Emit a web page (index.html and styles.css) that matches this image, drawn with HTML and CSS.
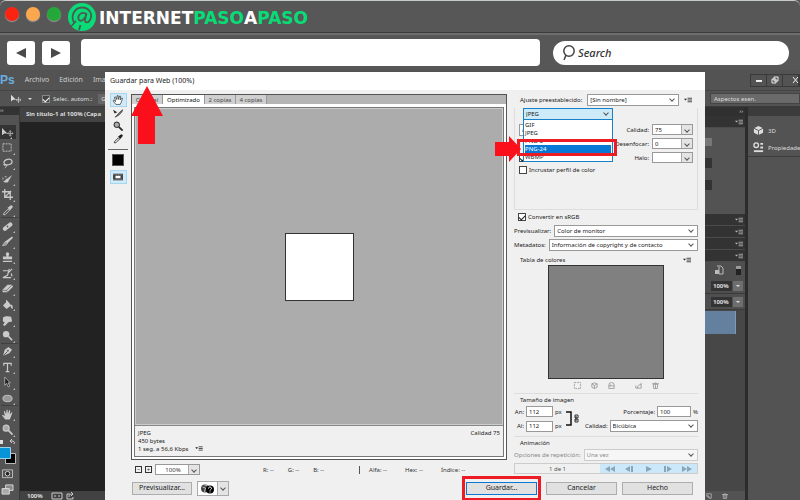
FILE: index.html
```html
<!DOCTYPE html>
<html lang="es">
<head>
<meta charset="utf-8">
<title>Guardar para Web</title>
<link rel="stylesheet" href="styles.css">
</head>
<body>
<svg class="sprite" aria-hidden="true">
  <symbol id="i-move" viewBox="0 0 14 12"><path d="M1 1v8l2.400-2H7z" fill="currentColor"/><path d="M10 4v6M7 7h6M9 5l1-1 1 1M9 9l1 1 1-1M8 6L7 7l1 1M12 6l1 1-1 1" fill="none" stroke="currentColor" stroke-width=".8"/></symbol>
  <symbol id="i-marquee" viewBox="0 0 14 12"><path d="M2 2h9v8H2z" fill="none" stroke="currentColor" stroke-dasharray="2 1"/></symbol>
  <symbol id="i-lasso" viewBox="0 0 14 12"><ellipse cx="7.500" cy="4.500" rx="4.500" ry="3" fill="none" stroke="currentColor" stroke-width="1.300" transform="rotate(-12 7 4)"/><path d="M4 6c-2 1-1 3 1 2s1 2-1 3" fill="none" stroke="currentColor"/></symbol>
  <symbol id="i-quick" viewBox="0 0 14 12"><path d="M12 1L7 5l1.500 2z" fill="currentColor"/><path d="M7 5c-2 0-2 3-5 3 2 2 6 2 6.500-1z" fill="currentColor"/><path d="M2 6V4M4 3h2" stroke="currentColor"/></symbol>
  <symbol id="i-crop" viewBox="0 0 14 12"><path d="M4 0v9h9M1 3h9v9M5 8l6-6" fill="none" stroke="currentColor" stroke-width="1.400"/></symbol>
  <symbol id="i-dropper" viewBox="0 0 14 12"><path d="M2.500 10.500L3 9l4.500-4.500 1.500 1.500L4.500 10.500z" fill="none" stroke="currentColor"/><path d="M7 3l1-.5L10 .8a1.500 1.500 0 0 1 2.200 2.200L10.500 5l-.5 1z" fill="currentColor"/></symbol>
  <symbol id="i-heal" viewBox="0 0 14 12"><rect x="1" y="4" width="12" height="4.500" rx="2" transform="rotate(-38 7 6)" fill="currentColor"/><path d="M6 6h2M7 5v2" stroke="#555"/></symbol>
  <symbol id="i-brush" viewBox="0 0 14 12"><path d="M12 .5L13 2 7 8 4.500 6z" fill="currentColor"/><path d="M4.500 6C3 7 3 9 1.500 10.500 4 10.500 6.500 10 7 8z" fill="#999" stroke="currentColor" stroke-width=".7"/></symbol>
  <symbol id="i-stamp" viewBox="0 0 14 12"><path d="M5.500 1a2 2 0 0 1 3 0c1 1-.5 3-.5 4h4v3H2V5h4c0-1-1.500-3-.5-4zM2 9.500h10v1.500H2z" fill="currentColor"/></symbol>
  <symbol id="i-history" viewBox="0 0 14 12"><path d="M2 3h6M9 1L7 8 2 10.500h9" fill="none" stroke="currentColor" stroke-width="1.300"/><path d="M12 1L8 5M11 6l1 3" stroke="currentColor" stroke-width="1.300"/></symbol>
  <symbol id="i-eraser" viewBox="0 0 14 12"><path d="M1 8l6-6h5l1 2-6 6H2z" fill="currentColor"/><path d="M1 8h5l6-6M6 8l1 2" fill="none" stroke="#555" stroke-width=".7"/></symbol>
  <symbol id="i-bucket" viewBox="0 0 14 12"><path d="M2 7l5-5 4 5-5 4zM11 6c2 1 2 3 1.500 5-1.500-1-2-2-2-4z" fill="currentColor"/><path d="M6 6V1" stroke="currentColor"/></symbol>
  <symbol id="i-smudge" viewBox="0 0 14 12"><path d="M2 3c2-2 6-2 9-1l1 5-4 1-4 4-2-1 2-3-2-1z" fill="currentColor"/></symbol>
  <symbol id="i-dodge" viewBox="0 0 14 12"><circle cx="5.500" cy="4.500" r="3.500" fill="currentColor"/><path d="M8 7l4 4" stroke="currentColor" stroke-width="1.800"/></symbol>
  <symbol id="i-pen" viewBox="0 0 14 12"><path d="M2 11l2-7 4-3 4 3-3 4z" fill="currentColor"/><path d="M2 11l5-5" stroke="#555"/><circle cx="7.500" cy="5" r="1" fill="#555"/></symbol>
  <symbol id="i-type" viewBox="0 0 14 12"><path d="M3 4V1.500h8V4M7 1.500v9M5 10.500h4" fill="none" stroke="currentColor" stroke-width="1.300"/></symbol>
  <symbol id="i-path" viewBox="0 0 14 12"><path d="M4 0v9l2-2 2 4 1.500-1-2-3.500H10z" fill="#1b1b1b" stroke="currentColor" stroke-width=".8"/></symbol>
  <symbol id="i-ellipse" viewBox="0 0 14 12"><ellipse cx="7" cy="6" rx="5" ry="3.500" fill="#999" stroke="currentColor"/></symbol>
  <symbol id="i-hand" viewBox="0 0 14 12"><path d="M4.500 11.500L1 7l1-.7L4.200 8 3 2.500l1-.4L5.500 5.500 6 .8h1l.5 4.500L9 1.200l1 .3-.5 4.500L11.500 3.500l.8.500L10.500 9l-1 2.500z" fill="currentColor"/></symbol>
  <symbol id="i-hand-o" viewBox="0 0 14 12"><path d="M4.500 11.300L1 7l1-.9L4.200 8 2.800 2.700l1.200-.5L5.500 5.500 6 .8h1.200l.3 4.500L9 1.200l1.200.3-.7 4.500L11.500 3.500l1 .5L10.700 9l-1 2.300z" fill="#fff" stroke="#222" stroke-width=".8"/></symbol>
  <symbol id="i-zoom" viewBox="0 0 14 12"><circle cx="5.500" cy="4.500" r="3.300" fill="#aaa" stroke="currentColor" stroke-width="1.200"/><path d="M8 7l4.500 4.500" stroke="currentColor" stroke-width="2"/></symbol>
  <symbol id="i-slice" viewBox="0 0 14 12"><path d="M1 2l5 3-3 1.500z" fill="currentColor"/><path d="M12.500 2c0 3-4 7-9 9L9 5z" fill="#777" stroke="currentColor" stroke-width=".7"/></symbol>
  <symbol id="i-mask" viewBox="0 0 14 12"><path d="M1.500 2h11v8.500h-11z" fill="none" stroke="currentColor" stroke-width=".8"/><circle cx="7" cy="6.200" r="2.500" fill="#222" stroke="currentColor"/></symbol>
  <symbol id="i-screen" viewBox="0 0 14 12"><path d="M5 1h8v6H5z" fill="#888" stroke="currentColor"/><path d="M1 5h8v6H1z" fill="#aaa" stroke="currentColor"/></symbol>
  <symbol id="i-flyout" viewBox="0 0 9 6"><path d="M0 1.500h3.400L1.700 3.500z" fill="currentColor"/><path d="M4 1h5M4 3h5M4 5h5" stroke="currentColor" stroke-width=".9"/></symbol>
  <symbol id="i-page" viewBox="0 0 8 8"><path d="M1 1h6v6H4L1 4zM1 4h3v3" fill="none" stroke="currentColor"/></symbol>
  <symbol id="i-trash" viewBox="0 0 8 8"><path d="M0 2h8M3 1h2M1.500 2.500h5L6 7.500H2zM4 3v4" fill="none" stroke="currentColor"/></symbol>
  <symbol id="i-lock" viewBox="0 0 8 8"><path d="M1 7.500V3.500a3 3 0 0 1 6 0v4zM1 4.500h6M3 4.500V3" fill="none" stroke="currentColor"/></symbol>
</svg>

<header class="titlebar">
  <span class="light red"></span><span class="light amber"></span><span class="light green"></span>
  <svg class="logo" viewBox="0 0 28 28" aria-hidden="true">
    <circle cx="14" cy="14" r="14" fill="#09dc76"/>
    <path d="M6.500 20C2 14 6 4.500 14 4.500S25 12 22 17c-2 3.500-5.500 3-5 0l1.500-7" fill="none" stroke="#4d5a54" stroke-width="1.800"/>
    <path d="M18 11c-4-3-8.500 1-7.500 5 1 3 5 2 6.500-2M8 18l-5.500 6M12.500 22l-1.500 5" fill="none" stroke="#4d5a54" stroke-width="1.800"/>
  </svg>
  <div class="brand">INTERNET<b>PASO</b>A<b>PASO</b></div>
</header>

<nav class="navbar" aria-label="Navegador">
  <button class="nav" aria-label="Atrás"><svg viewBox="0 0 10 10"><path d="M10 0v10L0 5z"/></svg></button>
  <button class="nav" aria-label="Adelante"><svg viewBox="0 0 10 10"><path d="M0 0v10l10-5z"/></svg></button>
  <input class="address" type="text" aria-label="Dirección">
  <label class="search">
    <svg viewBox="0 0 14 16"><circle cx="7" cy="6" r="5.200"/><path d="M4 10l-2 5"/></svg>
    <input type="text" placeholder="Search" aria-label="Buscar">
  </label>
</nav>

<main class="app">
  <div class="menubar">
    <span class="ps">Ps</span><a href="#">Archivo</a><a href="#">Edición</a><a href="#">Ima</a>
    <div class="winctl"><button aria-label="Minimizar"><svg viewBox="0 0 16 10"><path d="M5 6h6" stroke-width="2"/></svg></button><button aria-label="Restaurar"><svg viewBox="0 0 16 10"><path d="M7 2h4v4H7zM5 4h4v4H5z"/></svg></button><button aria-label="Cerrar"><svg viewBox="0 0 16 10"><path d="M10 2l5 6M15 2l-5 6"/></svg></button></div>
  </div>
  <div class="options">
    <svg class="ico"><use href="#i-move"/></svg><i class="caret"></i>
    <label class="auto"><input type="checkbox" checked>Selec. autom.:</label>
    <span class="group">G</span>
    <button class="workspace">Aspectos esen.</button>
  </div>
  <div class="work">
    <aside class="tools">
      <div class="grip">››</div>
      <div class="toollist">
        <button class="on" aria-label="Mover"><svg><use href="#i-move"/></svg></button>
        <button aria-label="Marco"><svg><use href="#i-marquee"/></svg></button>
        <button aria-label="Lazo"><svg><use href="#i-lasso"/></svg></button>
        <button aria-label="Selección rápida"><svg><use href="#i-quick"/></svg></button>
        <button aria-label="Recortar"><svg><use href="#i-crop"/></svg></button>
        <button class="last" aria-label="Cuentagotas"><svg><use href="#i-dropper"/></svg></button>
        <button aria-label="Corrector"><svg><use href="#i-heal"/></svg></button>
        <button aria-label="Pincel"><svg><use href="#i-brush"/></svg></button>
        <button aria-label="Tampón"><svg><use href="#i-stamp"/></svg></button>
        <button aria-label="Historia"><svg><use href="#i-history"/></svg></button>
        <button aria-label="Borrador"><svg><use href="#i-eraser"/></svg></button>
        <button aria-label="Bote"><svg><use href="#i-bucket"/></svg></button>
        <button aria-label="Dedo"><svg><use href="#i-smudge"/></svg></button>
        <button class="last" aria-label="Sobreexponer"><svg><use href="#i-dodge"/></svg></button>
        <button aria-label="Pluma"><svg><use href="#i-pen"/></svg></button>
        <button aria-label="Texto"><svg><use href="#i-type"/></svg></button>
        <button aria-label="Trazado"><svg><use href="#i-path"/></svg></button>
        <button class="last" aria-label="Elipse"><svg><use href="#i-ellipse"/></svg></button>
        <button aria-label="Mano"><svg><use href="#i-hand"/></svg></button>
        <button aria-label="Zoom"><svg><use href="#i-zoom"/></svg></button>
      </div>
      <svg class="swatches" viewBox="0 0 18 30"><path d="M0 3h3v4H0z" fill="#ddd"/><path d="M10 4h3a2 2 0 0 1 1 3M12 2l-2 2 2 2" fill="none" stroke="#ccc"/><path d="M5.500 16.500h10v10h-10z" fill="#000" stroke="#bbb"/><path d="M-1 10.500h11.500v11H-1z" fill="#0795d8" stroke="#9bd3ee"/></svg>
      <div class="modes"><svg><use href="#i-mask"/></svg><svg><use href="#i-screen"/></svg></div>
    </aside>
    <section class="document">
      <div class="doctab">Sin título-1 al 100% (Capa</div>
      <div class="stage"></div>
      <div class="docstatus">100%<svg viewBox="0 0 24 8"><path d="M1 1h10v6H1zM4 3v2M8 3v2M19 2h-3v5h6V5M18 5c0-3 2-3 4-3M20 0l2 2-2 2" fill="none" stroke="#ccc"/></svg></div>
    </section>
    <aside class="layers">
      <div class="strip">››</div>
      <div class="panelhead"><svg><use href="#i-flyout"/></svg></div>
      <div class="adjust"><i></i><i></i><i></i></div>
      <div class="panelhead"><svg><use href="#i-flyout"/></svg></div>
      <div class="panelhead"><svg><use href="#i-flyout"/></svg></div>
      <div class="panelhead"><svg><use href="#i-flyout"/></svg></div>
      <div class="panelhead"><svg><use href="#i-flyout"/></svg></div>
      <div class="filters"><svg viewBox="0 0 8 8"><path d="M2 0h4l2 2v6H4M4 8V1" fill="none" stroke="currentColor"/><path d="M0 4h4v4H0z" fill="currentColor"/></svg><b></b></div>
      <div class="pct"><span>100%</span><b><i class="caret"></i></b></div>
      <div class="pct"><span>100%</span><b><i class="caret"></i></b></div>
      <div class="layerlist"><div class="layer"></div></div>
      <div class="layerfoot"><svg viewBox="0 0 8 8"><use href="#i-page"/></svg><svg viewBox="0 0 8 8"><use href="#i-trash"/></svg></div>
    </aside>
    <aside class="dock">
      <div class="strip"></div>
      <div class="dockgroup">
      <button><svg viewBox="0 0 12 12"><path d="M6 1l5 2.500v5L6 11 1 8.500v-5z" fill="#ddd"/><path d="M1 3.500L6 6l5-2.500M6 6v5" fill="none" stroke="#555"/></svg>3D</button>
      <button><svg viewBox="0 0 12 12"><circle cx="3.500" cy="3.500" r="2.500" fill="none" stroke="#ddd" stroke-width="1.500"/><path d="M8 1h3v2H8zM8 5h3v2H8z" fill="#ddd"/><path d="M1 10h10" stroke="#ddd" stroke-width="2"/></svg>Propiedade</button>
      </div>
    </aside>
  </div>

  <section class="dialog" role="dialog" aria-labelledby="dlg">
    <h1 id="dlg">Guardar para Web (100%)</h1>
    <div class="dlgmain">
      <div class="dlgtools">
        <button class="sel" aria-label="Mano"><svg><use href="#i-hand-o"/></svg></button>
        <button aria-label="Sector"><svg><use href="#i-slice"/></svg></button>
        <button aria-label="Zoom"><svg><use href="#i-zoom"/></svg></button>
        <button aria-label="Cuentagotas"><svg><use href="#i-dropper"/></svg></button>
        <hr>
        <button class="black" aria-label="Color"></button>
        <button class="sel" aria-label="Sectores"><svg viewBox="0 0 14 12"><path d="M1 2h12v8H1z" fill="#444"/><path d="M4 4.500h6v3H4z" fill="#fff"/><path d="M1 3.200h12M1 8.800h12" stroke="#ccc" stroke-width=".7" stroke-dasharray="1 1"/></svg></button>
      </div>
      <div class="preview">
        <div class="tabs"><button>Original</button><button class="active">Optimizado</button><button>2 copias</button><button>4 copias</button></div>
        <div class="pane">
          <div class="canvas"><div class="art"></div></div>
          <div class="info"><p>JPEG<br>450 bytes<br>1 seg. a 56,6 Kbps <svg><use href="#i-flyout"/></svg></p><p>Calidad 75</p></div>
        </div>
      </div>
      <form class="settings">
        <div class="row preset"><label for="preset">Ajuste preestablecido:</label><span class="drop"><select id="preset"><option>[Sin nombre]</option></select></span><svg class="fly"><use href="#i-flyout"/></svg></div>
        <div class="optimize">
          <div class="format">
            <span class="drop blue"><select aria-label="Formato"><option>JPEG</option></select></span>
            <ul class="menu"><li>GIF</li><li>JPEG</li><li>PNG-8</li><li class="hot">PNG-24</li><li>WBMP</li></ul>
            <div class="mark"></div>
            <svg class="arrow-right" viewBox="0 0 26 26"><path d="M0 6h14V0l12 13-12 13v-6H0z"/></svg>
          </div>
          <div class="line"><span class="drop alg"><select aria-label="Algoritmo"><option>A</option></select></span><label for="q">Calidad:</label><span class="spin"><input id="q" value="75"><i></i></span></div>
          <div class="line"><label for="blur">Desenfocar:</label><span class="spin"><input id="blur" value="0"><i></i></span></div>
          <div class="line"><input class="opt" type="checkbox" aria-label="Optimizado" checked><label for="matte">Halo:</label><span class="spin"><input id="matte"><i></i></span></div>
          <label class="check"><input type="checkbox">Incrustar perfil de color</label>
        </div>
        <label class="check srgb"><input type="checkbox" checked>Convertir en sRGB</label>
        <div class="row wide"><label for="pv">Previsualizar:</label><span class="drop"><select id="pv"><option>Color de monitor</option></select></span></div>
        <div class="row wide"><label for="md">Metadatos:</label><span class="drop"><select id="md"><option>Información de copyright y de contacto</option></select></span></div>
        <div class="legend">Tabla de colores<svg class="fly"><use href="#i-flyout"/></svg></div>
        <div class="table"></div>
        <div class="tableicons"><svg viewBox="0 0 8 8"><path d="M.5.5h7v7h-7z" fill="none" stroke="currentColor" stroke-dasharray="2 1"/></svg><svg viewBox="0 0 8 8"><path d="M1 2l3-1 3 1v4L4 7.500 1 6zM1 2l3 2 3-2M4 4v3" fill="none" stroke="currentColor"/></svg><svg viewBox="0 0 8 8"><use href="#i-lock"/></svg><svg class="new" viewBox="0 0 8 8"><path d="M1 7h6V1M3 7c0-3 1-4 4-4M1 4v3" fill="none" stroke="currentColor"/></svg><svg viewBox="0 0 8 8"><use href="#i-trash"/></svg></div>
        <div class="legend ruled">Tamaño de imagen</div>
        <div class="dims">
          <label for="w">An:</label><input id="w" value="112"><span>px</span>
          <svg class="link" viewBox="0 0 16 18"><path d="M1 2h5v13H1" fill="none" stroke="#111" stroke-width="1.500"/><path d="M10 5h3v3h-3zM10 9h3v3h-3zM11 6v5" fill="none" stroke="#333"/></svg>
          <div class="pair"><label for="pc">Porcentaje:</label><input id="pc" value="100"><span>%</span></div>
          <label for="h">Al:</label><input id="h" value="112"><span>px</span>
          <div class="pair"><label for="qq">Calidad:</label><span class="drop"><select id="qq"><option>Bicúbica</option></select></span></div>
        </div>
        <div class="legend ruled">Animación</div>
        <div class="row wide off"><label for="rep">Opciones de repetición:</label><span class="drop"><select id="rep" disabled><option>Una vez</option></select></span></div>
        <div class="player"><span>1 de 1</span><div>
          <button type="button" aria-label="Primero"><svg viewBox="0 0 12 6"><path d="M6 0v6L1 3zM11 0v6L6 3z"/></svg></button><button type="button" aria-label="Anterior"><svg viewBox="0 0 12 6"><path d="M7 0v6L2 3zM8 0h2v6H8z"/></svg></button><button type="button" aria-label="Reproducir"><svg viewBox="0 0 12 6"><path d="M3 0v6l6-3z"/></svg></button><button type="button" aria-label="Siguiente"><svg viewBox="0 0 12 6"><path d="M5 0v6l5-3zM2 0h2v6H2z"/></svg></button><button type="button" aria-label="Último"><svg viewBox="0 0 12 6"><path d="M1 0v6l5-3zM6 0v6l5-3z"/></svg></button></div></div>
      </form>
    </div>
    <div class="readout">
      <button aria-label="Reducir">−</button><button aria-label="Ampliar">+</button>
      <span class="spin zoomlevel"><input aria-label="Zoom" value="100%"><i></i></span>
      <div class="rgb"><span>R: --</span><span>G: --</span><span>B: --</span></div>
      <div class="alpha"><span>Alfa: --</span><span>Hex: --</span><span>Índice: --</span></div>
    </div>
    <footer>
      <button class="btn prev">Previsualizar...</button>
      <span class="globe"><svg viewBox="0 0 14 10"><circle cx="4.500" cy="4.500" r="4" fill="#444"/><path d="M2 3l3 1-1 4M4 1l3 1" stroke="#bbb" fill="none"/><circle cx="9.500" cy="5.500" r="4" fill="#000"/><path d="M8 4.500c0-2 3-2 3 0 0 1-1.500 1-1.500 2M9.500 7.500v1" stroke="#fff" fill="none"/></svg><i></i></span>
      <span class="focus"><button class="btn">Guardar...</button></span>
      <button class="btn">Cancelar</button>
      <button class="btn">Hecho</button>
    </footer>
    <svg class="arrow-up" viewBox="0 0 32 58"><path d="M16 0l16 30h-8v28H7V30H0z"/></svg>
  </section>
</main>
</body>
</html>
```
FILE: styles.css
```css
* { box-sizing: border-box; }
html, body { height: 100%; }
body {
  margin: 0;
  display: flex;
  flex-direction: column;
  background: #575757;
  font: 6px/8px "Noto Sans", "Open Sans", sans-serif;
  color: #222;
  overflow: hidden;
}
button, input, select { font: inherit; color: inherit; margin: 0; padding: 0; border: 0; border-radius: 0; background: none; }
svg { display: block; overflow: visible; }
.sprite { position: absolute; width: 0; height: 0; }

/* Browser frame */
.titlebar {
  flex: none;
  height: 33px;
  display: flex;
  align-items: center;
  padding: 0 5px;
  gap: 7px;
  background: #575757;
  border-top: 1px solid #c6ccc8;
  border-bottom: 1px solid #3c3c3c;
  border-radius: 6px 6px 0 0;
}
.light { width: 14px; height: 14px; margin-bottom: 6px; border-radius: 50%; box-shadow: 0 1px 1px #999; }
.red { background: #fb2413; }
.amber { background: #fba74e; }
.green { background: #24a83a; }
.logo { width: 28px; height: 28px; }
.brand { font: bold 17px/20px "DejaVu Sans", sans-serif; color: #fff; margin: 2px 0 0 -4px; }
.brand b { color: #09dc76; }
.navbar {
  flex: none;
  height: 37px;
  display: flex;
  align-items: center;
  gap: 7px;
  padding: 2px 11px 2px 7px;
  border-top: 2px solid #6e6e6e;
  background: #575757;
}
.nav { width: 28px; height: 24px; border-radius: 3px; background: #fff; display: grid; place-items: center; }
.nav svg { width: 10px; height: 10px; fill: #4a4a4a; }
.address { flex: 459; min-width: 0; height: 27px; margin-left: 4px; border-radius: 4px; background: #fff; }
.search { flex: 227; min-width: 0; height: 24px; margin-left: 6px; padding-left: 9px; border-radius: 12px; background: #fff; display: flex; align-items: center; gap: 2px; }
.search svg { flex: none; width: 14px; height: 16px; fill: none; stroke: #444; stroke-width: 1.500; }
.search input { flex: 1; min-width: 0; font: italic 500 11px/14px "Noto Sans", sans-serif; }
.search input::placeholder { color: #333; opacity: 1; }

/* Editor behind the dialog */
.app { flex: 1; min-height: 0; position: relative; display: flex; flex-direction: column; background: #535353; color: #ddd; }
.menubar { height: 20px; flex: none; display: flex; align-items: center; gap: 10px; font-size: 7px; color: #ccc; }
.menubar a { color: inherit; text-decoration: none; }
.ps { font: bold 12px/16px "Liberation Sans", sans-serif; color: #6aaee0; }
.winctl { margin-left: auto; display: flex; border: 1px solid #3a3a3a; }
.winctl button { width: 16px; height: 11px; border-right: 1px solid #3a3a3a; }
.winctl svg { width: 16px; height: 10px; fill: none; stroke: #eee; }
.options { height: 17px; flex: none; display: flex; align-items: center; gap: 6px; padding-left: 10px; border-top: 1px solid #444; border-bottom: 1px solid #3a3a3a; }
.options .ico { width: 12px; height: 10px; }
.caret { width: 0; height: 0; border: 2px solid transparent; border-top-color: #ddd; border-bottom: 0; }
.auto { display: flex; align-items: center; gap: 3px; margin-left: 4px; }
.group { padding: 1px 3px; background: #666; }
.workspace { margin-left: auto; width: 90px; height: 11px; padding-left: 3px; text-align: left; background: #6a6a6a; border: 1px solid #444; }
.work { flex: 1; min-height: 0; display: flex; background: #3a3a3a; }
.tools { width: 20px; display: flex; flex-direction: column; background: #535353; border-right: 1px solid #383838; }
.grip { height: 18px; background: linear-gradient(#333 8px, #535353 8px); line-height: 7px; }
.toollist { height: 312px; display: flex; flex-direction: column; justify-content: space-between; }
.toollist button { height: 14px; padding-left: 1px; color: #cacaca; position: relative; }
.toollist button::after { content: ""; position: absolute; right: 4px; bottom: 0; border: 1px solid transparent; border-right-color: #bbb; border-bottom-color: #bbb; }
.toollist .on { background: #333; margin-right: 3px; }
.toollist .last { box-shadow: 0 2px 0 -1px #404040; }
.toollist svg, .modes svg { width: 13px; height: 11px; }
.swatches { width: 18px; height: 30px; }
.modes { display: grid; gap: 5px; padding: 1px; }
.document { flex: 1; min-width: 0; display: flex; flex-direction: column; }
.doctab { height: 15px; padding: 3px 6px; background: #434343; font-weight: bold; }
.stage { flex: 1; background: #222; }
.docstatus { height: 9px; display: flex; gap: 8px; padding-left: 7px; background: #424242; align-items: center; font-weight: bold; }
.docstatus svg { width: 24px; height: 8px; }
.layers { width: 43px; flex: none; display: flex; flex-direction: column; background: #474747; border-right: 3px solid #2c2c2c; }
.layers svg { width: 8px; height: 6px; color: #bbb; }
.strip { height: 9px; flex: none; background: #303030; text-align: right; padding-right: 2px; line-height: 8px; }
.panelhead { height: 12px; flex: none; display: flex; justify-content: flex-end; align-items: center; padding-right: 2px; background: #333; border-bottom: 1px solid #4b4b4b; }
.adjust { height: 86px; display: grid; gap: 12px; padding: 10px 0; background: #535353; align-content: start; }
.adjust i { width: 7px; height: 10px; background: #333; }
.adjust i:first-child { background: #777; height: 8px; }
.filters { height: 16px; flex: none; display: flex; justify-content: space-between; align-items: center; padding: 0 4px 0 10px; background: #4f4f4f; }
.filters svg { height: 8px; }
.filters b { width: 5px; height: 9px; background: #222; border-top: 3px solid #999; }
.pct { height: 16px; flex: none; display: flex; align-items: center; gap: 1px; padding: 0 2px 0 6px; background: #4f4f4f; border-bottom: 1px solid #3a3a3a; font-weight: bold; }
.pct span { flex: 1; background: #333; padding: 1px 2px; }
.pct b { width: 10px; height: 10px; display: grid; place-items: center; background: #6e6e6e; }
.layerlist { flex: 1; padding: 1px 9px 0 0; }
.layer { height: 23px; background: #64809f; border-right: 1px solid #8299b5; }
.layerfoot { height: 9px; display: flex; gap: 8px; align-items: center; background: #535353; }
.dock { width: 52px; flex: none; overflow: hidden; background: #535353; }
.dock .strip { background: #3b3b3b; }
.dockgroup { padding-top: 6px; border-bottom: 1px solid #3d3d3d; }
.dock button { display: flex; align-items: center; gap: 4px; height: 17px; padding-left: 5px; }
.dock svg { width: 11px; height: 11px; flex: none; }

/* Save for web dialog */
.dialog { position: absolute; inset: 2px 95px 0 105px; display: flex; flex-direction: column; background: #f0f0f0; color: #222; }
.dialog h1 { margin: 0; height: 18px; flex: none; padding: 4px 5px; background: #fff; font: 7px/10px "Noto Sans", sans-serif; }
.dlgmain { flex: 1; min-height: 0; display: flex; padding: 4px 5px 3px 0; }
.dlgtools { width: 26px; display: flex; flex-direction: column; align-items: center; gap: 1px; flex: none; }
.dlgtools button { width: 15px; height: 12px; display: grid; place-items: center; }
.dlgtools svg { width: 12px; height: 10px; color: #222; }
.dlgtools .sel { background: #cfeafa; outline: 1px solid #a5d5ef; }
.dlgtools hr { width: 20px; margin: 3px 0; border: 0; border-top: 1px solid #666; }
.dlgtools .black { width: 12px; margin-bottom: 4px; background: #000; border: 1px solid #555; }
.preview { flex: 1; min-width: 0; display: flex; flex-direction: column; border: 1px solid #555; background: #fff; }
.tabs { height: 9px; flex: none; display: flex; background: #b5b5b5; }
.tabs button { width: 31px; background: #d0d0d0; border-right: 1px solid #999; line-height: 8px; color: #444; }
.tabs .active { width: 42px; background: #fff; color: #111; }
.pane { flex: 1; margin: 3px 2px 2px; display: flex; flex-direction: column; border: 1px solid #777; }
.canvas { flex: 1; display: grid; place-items: center; background: #acacac; border: 1px solid #ccc; }
.art { width: 69px; height: 68px; background: #fff; border: 1px solid #333; }
.info { height: 31px; flex: none; display: flex; justify-content: space-between; padding: 3px; background: #f0f0f0; border-top: 1px solid #888; }
.info p { margin: 0; }
.info svg { display: inline-block; width: 8px; height: 5px; margin-left: 5px; }
.settings { width: 188px; flex: none; margin-left: 5px; padding: 0 2px; }
.row { display: flex; align-items: center; gap: 3px; margin-bottom: 2px; }
.row label { flex: none; }
.drop { flex: 1; position: relative; height: 12px; display: block; }
.drop select { appearance: none; width: 100%; height: 100%; padding: 0 2px; border: 1px solid #999; background: #fff; display: block; opacity: 1; }
.drop::after, .spin i::after, .globe i::after { content: ""; width: 3px; height: 3px; border: solid #555; border-width: 0 1px 1px 0; transform: rotate(45deg); }
.drop::after { position: absolute; right: 5px; top: 3px; }
.preset { padding: 0 6px; gap: 5px; }
.fly { width: 8px; height: 6px; }
.optimize { height: 102px; display: flex; flex-direction: column; gap: 3px; padding: 0 4px; margin: 0 0 3px; border: solid #ddd; border-width: 0 1px 1px; }
.format { position: relative; z-index: 2; width: 90px; margin: 0 0 1px 4px; }
.blue select { background: #cdeaf8; border-color: #1780c8; }
.menu { position: absolute; inset: 12px 0 auto 0; margin: 0; padding: 1px 1px 0; list-style: none; background: #fff; border: 1px solid #1780c8; border-top: 0; }
.menu li { height: 8px; line-height: 8px; }
.menu .hot { background: #0878d7; color: #fff; }
.mark { position: absolute; left: -6px; top: 31px; width: 100px; height: 17px; border: 3px solid #ed1c24; }
.arrow-right { position: absolute; left: -28px; top: 28px; width: 26px; height: 26px; fill: #fb0f1b; }
.line { height: 11px; display: flex; align-items: center; justify-content: flex-end; gap: 3px; }
.alg { width: 80px; flex: none; margin-right: auto; }
.spin { width: 41px; height: 11px; display: flex; border: 1px solid #999; background: #fff; }
.spin input { flex: 1; min-width: 0; padding-left: 2px; }
.spin i, .globe i { width: 11px; display: grid; place-items: center; background: #e4e4e4; border-left: 1px solid #aaa; }
.check { display: flex; align-items: center; gap: 2px; }
.opt { margin-right: auto; }
input[type="checkbox"] { appearance: none; flex: none; width: 8px; height: 8px; border: 1px solid #444; background: #fff; display: grid; place-items: center; }
input[type="checkbox"]:checked::after { content: ""; width: 5px; height: 3px; border: solid #222; border-width: 0 0 1px 1px; transform: rotate(-45deg); }
.line .opt { margin-right: auto; }
.auto input[type="checkbox"] { background: #444; border-color: #888; }
.auto input[type="checkbox"]:checked::after { border-color: #fff; }
.srgb { padding-left: 4px; margin-bottom: 4px; }
.legend { display: flex; align-items: center; justify-content: space-between; padding: 0 7px 0 6px; height: 10px; margin-top: 4px; }
.table { width: 116px; height: 114px; margin: 0 auto 3px 34px; background: #808080; border: 1px solid #333; }
.tableicons { display: flex; gap: 10px; padding-left: 60px; color: #999; }
.tableicons svg { width: 7px; height: 7px; }
.tableicons .new { margin-left: 10px; }
.ruled { height: 13px; border-top: 1px solid #ddd; }
.dims { display: grid; grid-template-columns: 10px 27px 8px 18px 1fr; gap: 3px 2px; align-items: center; }
.dims input { width: 27px; height: 11px; border: 1px solid #999; padding-left: 2px; background: #fff; }
.dims > label { text-align: right; }
.link { grid-row: 1 / 3; grid-column: 4; width: 16px; height: 18px; }
.pair { display: flex; align-items: center; justify-content: flex-end; gap: 2px; grid-column: 5; }
.dims .pair input { width: 34px; }
.off { color: #888; }
.off select { border-color: #ccc; background: #f6f6f6; }
.player { display: flex; height: 11px; border: 1px solid #ccc; align-items: center; color: #555; }
.player span { flex: 1; text-align: center; }
.player div { display: flex; width: 97px; height: 100%; background: #cbe8f8; }
.player button { flex: 1; display: grid; place-items: center; }
.player svg { width: 12px; height: 6px; fill: #8ba5b8; }
.readout { height: 13px; flex: none; display: flex; align-items: center; gap: 3px; padding-left: 30px; color: #333; }
.readout button { width: 7px; height: 7px; border: 1px solid #333; line-height: 4px; }
.zoomlevel { width: 45px; }
.zoomlevel input { text-align: center; }
.rgb { display: flex; gap: 14px; margin-left: 60px; }
.alpha { display: flex; gap: 18px; margin-left: 32px; padding-left: 9px; border-left: 1px solid #555; }
footer { height: 24px; flex: none; display: flex; align-items: center; padding: 0 12px 0 27px; gap: 5px; }
.btn { width: 71px; height: 13px; background: #e1e1e1; border: 1px solid #adadad; font-size: 7px; line-height: 10px; }
.prev { width: 60px; }
.globe { display: flex; width: 32px; height: 15px; margin-right: auto; border: 1px solid #aaa; background: #fff; }
.globe svg { flex: 1; height: 10px; margin: 2px; }
.focus { border: 3px solid #ed1c24; padding: 3px 1px; }
.focus .btn { display: block; border: 1px solid #0878d7; }
.arrow-up { position: absolute; left: 26px; top: 14px; width: 32px; height: 58px; fill: #fb0f1b; }
```
